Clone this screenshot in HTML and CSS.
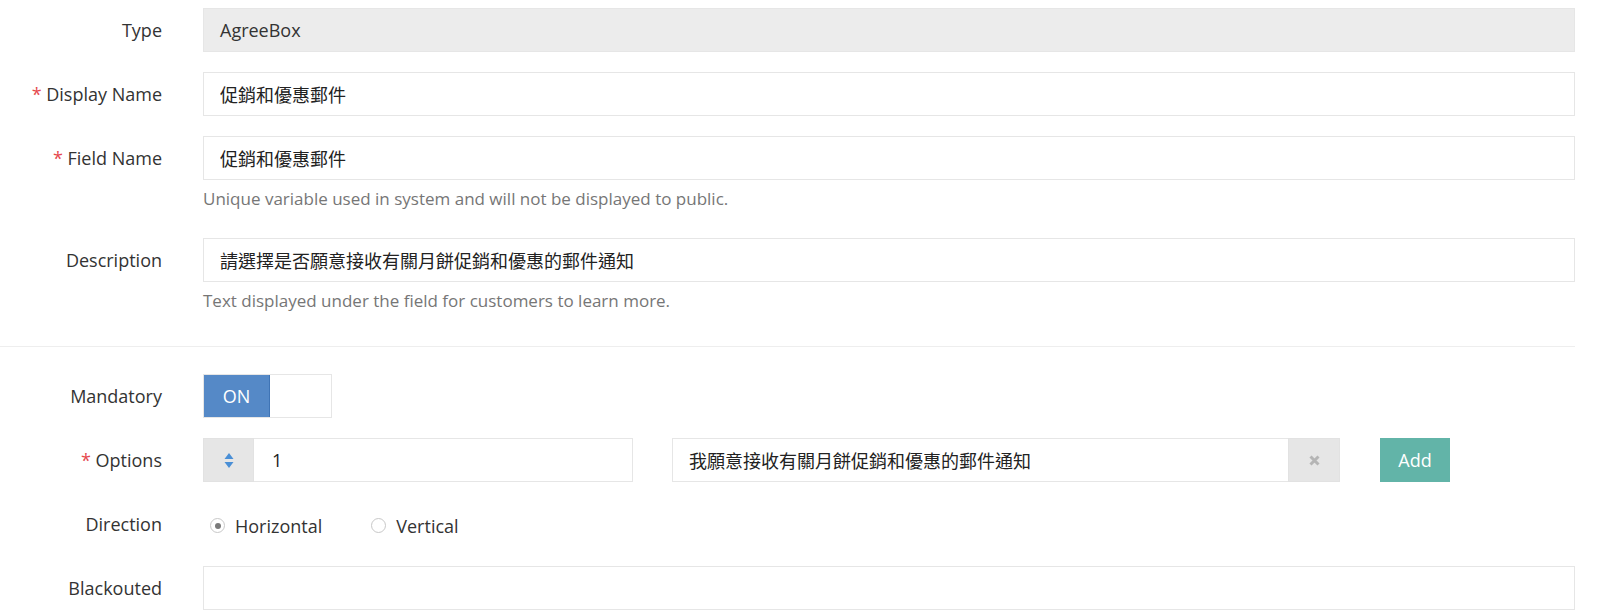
FILE: index.html
```html
<!DOCTYPE html>
<html lang="zh-Hant">
<head>
    <meta charset="UTF-8">
    <meta name="viewport" content="width=device-width, initial-scale=1.0">
    <title>Edit Field</title>
    <link rel="stylesheet" href="styles.css">
</head>
<body>
  <div class="form">
    <div class="row">
      <label class="label">Type</label>
      <div class="field">
        <div class="input readonly">AgreeBox</div>
      </div>
    </div>

    <div class="row">
      <label class="label"><span class="req">*</span> Display Name</label>
      <div class="field">
        <input class="input" type="text" value="促銷和優惠郵件">
      </div>
    </div>

    <div class="row">
      <label class="label"><span class="req">*</span> Field Name</label>
      <div class="field">
        <input class="input" type="text" value="促銷和優惠郵件">
        <p class="help">Unique variable used in system and will not be displayed to public.</p>
      </div>
    </div>

    <div class="row">
      <label class="label">Description</label>
      <div class="field">
        <input class="input" type="text" value="請選擇是否願意接收有關月餅促銷和優惠的郵件通知">
        <p class="help">Text displayed under the field for customers to learn more.</p>
      </div>
    </div>

    <hr class="divider">

    <div class="row">
      <label class="label">Mandatory</label>
      <div class="field">
        <div class="toggle">
          <span class="toggle-on">ON</span>
          <span class="toggle-off"></span>
        </div>
      </div>
    </div>

    <div class="row">
      <label class="label"><span class="req">*</span> Options</label>
      <div class="field options">
        <div class="input-group sort-group">
          <span class="addon">
            <svg width="10" height="15" viewBox="0 0 10 15">
              <path d="M5 0 L9.5 6 H0.5 Z" fill="#4a8fd6"/>
              <path d="M5 15 L9.5 9 H0.5 Z" fill="#4a8fd6"/>
            </svg>
          </span>
          <input class="input" type="text" value="1">
        </div>
        <div class="input-group text-group">
          <input class="input" type="text" value="我願意接收有關月餅促銷和優惠的郵件通知">
          <span class="addon">
            <svg width="11" height="11" viewBox="0 0 11 11">
              <path d="M1.5 1.5 L9.5 9.5 M9.5 1.5 L1.5 9.5" stroke="#b5b5b5" stroke-width="3"/>
            </svg>
          </span>
        </div>
        <button class="btn-add">Add</button>
      </div>
    </div>

    <div class="row">
      <label class="label">Direction</label>
      <div class="field radios">
        <label class="radio"><span class="dot checked"></span>Horizontal</label>
        <label class="radio"><span class="dot"></span>Vertical</label>
      </div>
    </div>

    <div class="row">
      <label class="label">Blackouted</label>
      <div class="field">
        <input class="input" type="text" value="">
      </div>
    </div>
  </div>
</body>
</html>
```

FILE: styles.css
```css
body{
    margin: 0;
    background: #fff;
    font-family: "Open Sans", "Noto Sans CJK TC", sans-serif;
    color: #333;
}

.form{
    width: 1575px;
    padding-top: 8px;
}

.row{
    display: grid;
    grid-template-columns: 162px 1fr;
    column-gap: 41px;
    align-items: start;
    margin-bottom: 20px;
}

.label{
    height: 44px;
    line-height: 44px;
    text-align: right;
    font-size: 18px;
    color: #333;
    white-space: nowrap;
}

.req{
    color: #e5484d;
}

.input{
    display: block;
    width: 100%;
    height: 44px;
    box-sizing: border-box;
    border: 1px solid #e6e6e6;
    border-radius: 0;
    padding: 0 16px;
    font-family: "Open Sans", "Noto Sans CJK TC", sans-serif;
    font-size: 18px;
    line-height: 42px;
    color: #222;
    background: #fff;
    outline: none;
}

.readonly{
    background: #ececec;
    color: #333;
}

.help{
    margin: 8px 0 8px 0;
    font-size: 17px;
    line-height: 22px;
    color: #767676;
}

.divider{
    border: none;
    border-top: 1px solid #eeeeee;
    margin: 26px 0 27px 0;
}

/* toggle switch */
.toggle{
    display: flex;
    width: 129px;
    height: 44px;
    box-sizing: border-box;
    border: 1px solid #e6e6e6;
}
.toggle-on{
    width: 65px;
    background: #5589c7;
    color: #fff;
    font-size: 18px;
    display: flex;
    align-items: center;
    justify-content: center;
    border-right: 1px solid #3f74b5;
}
.toggle-off{
    flex: 1;
}

/* options row */
.options{
    display: flex;
    align-items: center;
}
.input-group{
    display: flex;
    height: 44px;
}
.sort-group{
    width: 430px;
}
.text-group{
    width: 668px;
    margin-left: 39px;
}
.input-group .input{
    flex: 1;
}
.sort-group .input{
    border-left: none;
    padding-left: 18px;
}
.text-group .input{
    border-right: none;
}
.addon{
    width: 51px;
    flex: none;
    background: #e6e6e6;
    border: 1px solid #e2e2e2;
    box-sizing: border-box;
    display: flex;
    align-items: center;
    justify-content: center;
}
.text-group .addon{
    width: 52px;
}
.btn-add{
    margin-left: 40px;
    width: 70px;
    height: 44px;
    border: none;
    background: #62b4a8;
    color: #fff;
    font-family: "Open Sans", sans-serif;
    font-size: 18px;
    cursor: pointer;
}

/* radios */
.radios{
    display: flex;
    align-items: center;
    height: 44px;
    padding-top: 3px;
    box-sizing: border-box;
}
.radio{
    display: flex;
    align-items: center;
    font-size: 18px;
    color: #333;
    margin-left: 7px;
    margin-right: 38px;
}
.radio + .radio{
    margin-left: 11px;
}
.dot{
    width: 15px;
    height: 15px;
    box-sizing: border-box;
    border: 1px solid #c8c8c8;
    border-radius: 50%;
    margin-right: 10px;
    position: relative;
    background: #fff;
}
.dot.checked::after{
    content: "";
    position: absolute;
    left: 3.5px;
    top: 3.5px;
    width: 6px;
    height: 6px;
    border-radius: 50%;
    background: #7a7a7a;
}
```
